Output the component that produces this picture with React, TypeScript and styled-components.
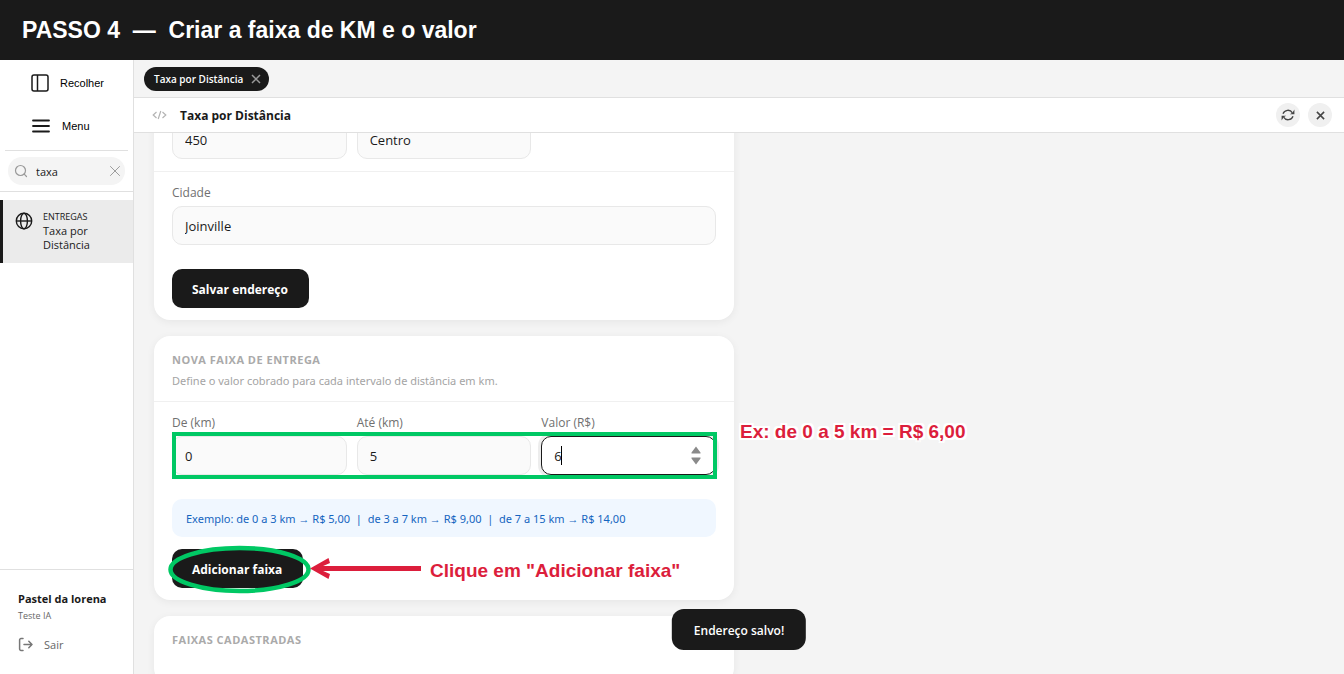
import React from 'react';
import styled, { createGlobalStyle } from 'styled-components';

const ui = `'Open Sans', 'Noto Sans', sans-serif`;
const noto = `'Noto Sans', 'Open Sans', sans-serif`;
const arial = `'Liberation Sans', Arial, sans-serif`;
const ink = '#1a1a1a';
const line = '#e0e0e0';
const green = '#00c864';
const red = '#dc1e3c';

const GlobalStyle = createGlobalStyle`
  * { box-sizing: border-box; }
  body { margin: 0; font-family: ${ui}; color: ${ink}; background: #f4f4f4; }
  button, input { font-family: inherit; color: inherit; margin: 0; }
  button { border: 0; background: none; padding: 0; cursor: pointer; }
  svg { display: block; flex: none; }
  h1, h2, p { margin: 0; }
`;

const Page = styled.div`
  display: flex;
  flex-direction: column;
  height: 100vh;
  overflow: hidden;
`;

const StepBanner = styled.h1`
  flex: none;
  padding: 18px 22px;
  background: ${ink};
  color: #fff;
  font: bold 23px/24px ${arial};
  white-space: pre;
`;

const Shell = styled.div`
  display: flex;
  flex: 1;
  min-height: 0;
`;

const Sidebar = styled.aside`
  display: flex;
  flex-direction: column;
  flex: none;
  width: 134px;
  background: #fff;
  border-right: 1px solid ${line};
`;

const SideTools = styled.div`
  display: flex;
  flex-direction: column;
  gap: 10px;
  margin: 0 5px;
  padding: 6px 0 8px 25px;
  border-bottom: 1px solid ${line};
`;

const ToolButton = styled.button`
  display: flex;
  align-items: center;
  gap: 10px;
  height: 33px;
  color: #000;
  font: 500 11px/16px ${arial};
`;

const SearchArea = styled.div`
  padding: 6px 8px;
  border-bottom: 1px solid ${line};
`;

const SearchBox = styled.div`
  display: flex;
  align-items: center;
  gap: 8px;
  height: 28px;
  padding: 0 4px 0 6px;
  border-radius: 14px;
  background: #f4f4f4;
`;

const SearchInput = styled.input`
  flex: 1;
  min-width: 0;
  padding: 2px 0 0;
  border: 0;
  outline: 0;
  background: none;
  font-size: 11px;
  line-height: 16px;
`;

const NavItem = styled.a`
  display: flex;
  gap: 10px;
  margin-top: 8px;
  padding: 10px 24px 11px 12px;
  border-left: 3px solid ${ink};
  background: #ebebeb;
  color: ${ink};
  text-decoration: none;
  font-size: 11px;
  font-weight: 500;
  line-height: 14px;

  svg { margin-top: 2px; }
`;

const NavGroup = styled.span`
  display: block;
  font-size: 9px;
`;

const Account = styled.div`
  margin-top: auto;
  padding: 20px 18px 19px;
  border-top: 1px solid ${line};
`;

const AccountName = styled.p`
  font-size: 11px;
  font-weight: 700;
  line-height: 18px;
  white-space: nowrap;
`;

const AccountRole = styled.p`
  font-size: 9px;
  line-height: 16px;
  color: #666;
`;

const LogoutButton = styled.button`
  display: flex;
  align-items: center;
  gap: 10px;
  margin-top: 11px;
  font-size: 11px;
  line-height: 20px;
  color: #666;
`;

const Main = styled.main`
  position: relative;
  display: flex;
  flex-direction: column;
  flex: 1;
  min-width: 0;
`;

const TabBar = styled.div`
  display: flex;
  align-items: center;
  flex: none;
  height: 38px;
  padding: 0 10px;
  border-bottom: 1px solid ${line};
`;

const Tab = styled.div`
  display: flex;
  align-items: center;
  gap: 8px;
  height: 24px;
  padding: 0 8px 0 10px;
  border-radius: 12px;
  background: ${ink};
  color: #fff;
  font-size: 10px;
  font-weight: 600;
  line-height: 16px;
`;

const IconButton = styled.button`
  color: #999;
`;

const TitleBar = styled.header`
  display: flex;
  align-items: center;
  flex: none;
  gap: 12px;
  height: 35px;
  padding: 0 12px 0 18px;
  border-bottom: 1px solid ${line};
  background: #fff;
`;

const Title = styled.h2`
  flex: 1;
  padding-top: 2px;
  font-size: 12px;
  font-weight: 700;
  line-height: 18px;
`;

const TitleActions = styled.div`
  display: flex;
  gap: 8px;
`;

const RoundButton = styled.button`
  display: grid;
  place-items: center;
  width: 24px;
  height: 24px;
  border-radius: 50%;
  background: #f0f0f0;
  color: #444;
`;

const Scroller = styled.div`
  flex: 1;
  min-height: 0;
  overflow: hidden;
  padding: 0 20px;
`;

const Stack = styled.div`
  display: flex;
  flex-direction: column;
  gap: 16px;
  max-width: 580px;
  margin-top: -25px;
`;

const Card = styled.section`
  border-radius: 16px;
  background: #fff;
  box-shadow: 0 2px 8px rgba(0, 0, 0, 0.06);
`;

const Row = styled.div<{ $divided?: boolean }>`
  padding: 12px 18px;
  border-bottom: ${(p) => (p.$divided ? '1px solid #f0f0f0' : '0')};
`;

const Columns = styled.div`
  position: relative;
  display: grid;
  grid-template-columns: repeat(3, 1fr);
  gap: 10px;
`;

const Field = styled.label`
  position: relative;
  display: flex;
  flex-direction: column;
  gap: 4px;
  font-size: 12px;
  font-weight: 500;
  line-height: 18px;
  color: #707070;
`;

const Input = styled.input<{ $focused?: boolean }>`
  width: 100%;
  height: 39px;
  padding: 0 12px;
  border: 1px solid ${(p) => (p.$focused ? ink : '#e8e8e8')};
  border-radius: 10px;
  outline: 0;
  background: ${(p) => (p.$focused ? '#fff' : '#fafafa')};
  box-shadow: ${(p) => (p.$focused ? '0 0 0 3px rgba(0, 0, 0, 0.07)' : 'none')};
  color: ${ink};
  font-size: 13px;
`;

const Spinner = styled.span`
  position: absolute;
  right: 15px;
  bottom: 10px;
`;

const Caret = styled.span`
  position: absolute;
  left: 20px;
  bottom: 10px;
  width: 1px;
  height: 19px;
  background: #000;
`;

const Actions = styled.div`
  display: flex;
  padding: 12px 18px;
`;

const ActionSlot = styled.div`
  position: relative;
`;

const PrimaryButton = styled.button`
  height: 39px;
  padding: 2px 21px 0 20px;
  border-radius: 10px;
  background: ${ink};
  color: #fff;
  font-size: 12px;
  font-weight: 700;
  line-height: 18px;
`;

const CardHead = styled.div<{ $divided?: boolean }>`
  display: flex;
  flex-direction: column;
  gap: 5px;
  padding: 16px 18px 12px;
  border-bottom: ${(p) => (p.$divided ? '1px solid #f0f0f0' : '0')};
`;

const CardTitle = styled.h2`
  font-size: 11px;
  font-weight: 700;
  letter-spacing: 0.5px;
  line-height: 16px;
  color: #aaa;
`;

const CardHint = styled.p`
  font-family: ${noto};
  font-size: 11px;
  line-height: 16px;
  color: #a4a4a4;
`;

const Example = styled.p`
  margin: 12px 18px 0;
  padding: 11px 14px 9px;
  border-radius: 10px;
  background: #f0f7ff;
  color: #1565c0;
  font-family: ${noto};
  font-size: 11px;
  line-height: 18px;
  white-space: pre;
`;

const Toast = styled.div`
  position: absolute;
  bottom: 24px;
  left: 50%;
  transform: translateX(-50%);
  padding: 13px 22px 11px;
  border-radius: 12px;
  background: ${ink};
  color: #fff;
  font-size: 12px;
  font-weight: 600;
  line-height: 17px;
  white-space: nowrap;
`;

const FieldsMark = styled.div`
  position: absolute;
  inset: 18px -1px -4px 0;
  border: 4px solid ${green};
  pointer-events: none;
`;

const Note = styled.p`
  position: absolute;
  color: ${red};
  font: bold 19px/24px ${arial};
  white-space: nowrap;
  text-shadow: 2px 0 #fff, -2px 0 #fff, 0 2px #fff, 0 -2px #fff, 2px 2px #fff, -2px -2px #fff, 2px -2px #fff, -2px 2px #fff;
`;

const FieldsNote = styled(Note)`
  top: 6px;
  left: calc(100% + 24px);
`;

const ActionNote = styled(Note)`
  top: 10px;
  left: 258px;
`;

const ActionMark = styled.svg`
  position: absolute;
  top: -4px;
  left: -4px;
  pointer-events: none;
`;

const CrossIcon = ({ size, width }: { size: number; width: number }) => (
  <svg width={size} height={size} viewBox="0 0 10 10" fill="none" stroke="currentColor" strokeWidth={width}>
    <path d="M1 1l8 8M9 1L1 9" />
  </svg>
);

export default function App() {
  return (
    <Page>
      <GlobalStyle />
      <StepBanner>{'PASSO 4  —  Criar a faixa de KM e o valor'}</StepBanner>
      <Shell>
        <Sidebar>
          <SideTools>
            <ToolButton type="button">
              <svg width="20" height="20" viewBox="0 0 20 20" fill="none" stroke={ink} strokeWidth="1.5">
                <rect x="2" y="2" width="16" height="16" rx="2" />
                <path d="M7.5 2v16" />
              </svg>
              Recolher
            </ToolButton>
            <ToolButton type="button">
              <svg width="22" height="20" viewBox="0 0 22 20" stroke={ink} strokeWidth="1.8" strokeLinecap="round">
                <path d="M3 4.5h16M3 10h16M3 15.5h16" />
              </svg>
              Menu
            </ToolButton>
          </SideTools>
          <SearchArea>
            <SearchBox>
              <svg width="14" height="14" viewBox="0 0 14 14" fill="none" stroke="#999" strokeWidth="1.2" strokeLinecap="round">
                <circle cx="6.5" cy="6.5" r="5" />
                <path d="M10.2 10.2l2.3 2.3" />
              </svg>
              <SearchInput aria-label="Buscar" defaultValue="taxa" />
              <IconButton type="button" aria-label="Limpar">
                <CrossIcon size={12} width={0.8} />
              </IconButton>
            </SearchBox>
          </SearchArea>
          <NavItem href="#taxa">
            <svg width="18" height="18" viewBox="0 0 18 18" fill="none" stroke={ink} strokeWidth="1.4">
              <circle cx="9" cy="9" r="7.7" />
              <ellipse cx="9" cy="9" rx="3.4" ry="7.7" />
              <path d="M1.2 9h15.6" />
            </svg>
            <span>
              <NavGroup>ENTREGAS</NavGroup>
              Taxa por Distância
            </span>
          </NavItem>
          <Account>
            <AccountName>Pastel da lorena</AccountName>
            <AccountRole>Teste IA</AccountRole>
            <LogoutButton type="button">
              <svg width="16" height="16" viewBox="0 0 16 16" fill="none" stroke="#777" strokeWidth="1.5" strokeLinecap="round" strokeLinejoin="round">
                <path d="M5 1.500H3A1.400 1.400 0 0 0 1.600 2.900v9.200A1.400 1.400 0 0 0 3 13.500h2M6 7.500h8M10.800 4.300L14 7.500l-3.200 3.200" />
              </svg>
              Sair
            </LogoutButton>
          </Account>
        </Sidebar>
        <Main>
          <TabBar>
            <Tab>
              Taxa por Distância
              <IconButton type="button" aria-label="Fechar aba">
                <CrossIcon size={10} width={1.5} />
              </IconButton>
            </Tab>
          </TabBar>
          <TitleBar>
            <svg width="16" height="10" viewBox="0 0 16 10" fill="none" stroke="#b4b4b4" strokeWidth="1.2">
              <path d="M4.500 2L1.200 5l3.300 3M10.500 2L13.800 5l-3.300 3M8.800 1l-2.600 8" />
            </svg>
            <Title>Taxa por Distância</Title>
            <TitleActions>
              <RoundButton type="button" aria-label="Atualizar">
                <svg width="14" height="14" viewBox="0 0 14 14" fill="none" stroke="currentColor" strokeWidth="1.3">
                  <path d="M2 5.800A5.200 5.200 0 0 1 11.400 4.800M12 8.200A5.200 5.200 0 0 1 2.600 9.200" />
                  <path d="M13.400 1.600v4.600H8.800l2.600-1.400zM0.600 12.400V7.800h4.600L2.600 9.200z" fill="currentColor" stroke="none" />
                </svg>
              </RoundButton>
              <RoundButton type="button" aria-label="Fechar">
                <CrossIcon size={9} width={1.7} />
              </RoundButton>
            </TitleActions>
          </TitleBar>
          <Scroller>
            <Stack>
              <Card>
                <Row $divided>
                  <Columns>
                    <Input aria-label="Número" defaultValue="450" />
                    <Input aria-label="Bairro" defaultValue="Centro" />
                  </Columns>
                </Row>
                <Row>
                  <Field>
                    Cidade
                    <Input defaultValue="Joinville" />
                  </Field>
                </Row>
                <Actions>
                  <PrimaryButton type="button">Salvar endereço</PrimaryButton>
                </Actions>
              </Card>
              <Card>
                <CardHead $divided>
                  <CardTitle>NOVA FAIXA DE ENTREGA</CardTitle>
                  <CardHint>Define o valor cobrado para cada intervalo de distância em km.</CardHint>
                </CardHead>
                <Row>
                  <Columns>
                    <Field>
                      De (km)
                      <Input defaultValue="0" />
                    </Field>
                    <Field>
                      Até (km)
                      <Input defaultValue="5" />
                    </Field>
                    <Field>
                      Valor (R$)
                      <Input $focused defaultValue="6" />
                      <Caret />
                      <Spinner>
                        <svg width="10" height="19" viewBox="0 0 10 19" fill="#8a8a8a">
                          <path d="M5 0.500L9.500 6.500v1h-9v-1zM5 18.500L0.500 12.500v-1h9v1z" />
                        </svg>
                      </Spinner>
                    </Field>
                    <FieldsMark />
                    <FieldsNote>Ex: de 0 a 5 km = R$ 6,00</FieldsNote>
                  </Columns>
                </Row>
                <Example>{'Exemplo: de 0 a 3 km → R$ 5,00  |  de 3 a 7 km → R$ 9,00  |  de 7 a 15 km → R$ 14,00'}</Example>
                <Actions>
                  <ActionSlot>
                    <PrimaryButton type="button">Adicionar faixa</PrimaryButton>
                    <ActionMark width="258" height="50" viewBox="0 0 258 50" fill="none">
                      <ellipse cx="71.500" cy="24.500" rx="69" ry="21.500" stroke={green} strokeWidth="4.500" />
                      <path d="M148 23.500H253" stroke={red} strokeWidth="5" />
                      <path d="M142 23.500L160.500 13L162 18L154 21.500V25.500L162 29L160.500 34Z" fill={red} />
                    </ActionMark>
                    <ActionNote>Clique em "Adicionar faixa"</ActionNote>
                  </ActionSlot>
                </Actions>
              </Card>
              <Card>
                <CardHead>
                  <CardTitle>FAIXAS CADASTRADAS</CardTitle>
                </CardHead>
                <Row>
                  <Columns />
                </Row>
              </Card>
            </Stack>
          </Scroller>
          <Toast role="status">Endereço salvo!</Toast>
        </Main>
      </Shell>
    </Page>
  );
}
